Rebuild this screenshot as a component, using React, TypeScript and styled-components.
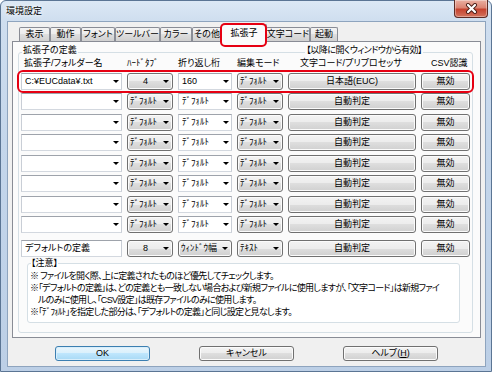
import React from "react";
import styled, { createGlobalStyle, css } from "styled-components";

const FONT = `"Liberation Sans", "Noto Sans CJK JP", sans-serif`;

const GlobalStyle = createGlobalStyle`
  html, body { margin: 0; padding: 0; background: #ffffff; }
  body {
    font-family: ${FONT};
    font-size: 9px;
    color: #000;
    font-feature-settings: "palt";
  }
  * { box-sizing: border-box; }
`;

const BTN_BG = `linear-gradient(180deg, #f3f3f3 0%, #ececec 50%, #dedede 50%, #d0d0d0 100%)`;

const Window = styled.div`
  width: 492px;
  height: 372px;
  display: flex;
  flex-direction: column;
  border: 1px solid #5b7594;
  border-radius: 6px 6px 0 0;
  padding: 0 5px 4px 6px;
  background: linear-gradient(180deg, #dce8f5 0px, #cfdeef 20px, #c4d6eb 140px, #bccfe6 100%);
`;

const TitleBar = styled.div`
  height: 20px;
  display: flex;
  align-items: flex-start;
`;

const Title = styled.span`
  margin: 5px 0 0 -1px;
  line-height: 11px;
  font-size: 9px;
  text-shadow: 0 0 3px #fff, 0 0 6px #fff;
`;

const CloseButton = styled.div`
  margin: -1px -2px 0 auto;
  width: 34px;
  height: 18px;
  display: flex;
  align-items: center;
  justify-content: center;
  border: 1px solid #5d2b24;
  border-top: none;
  border-radius: 0 0 4px 4px;
  background: linear-gradient(180deg, #eab0a2 0%, #dc8473 45%, #c6432f 55%, #d2735d 100%);
  box-shadow: inset 0 0 0 1px rgba(255, 255, 255, 0.35);
`;

const Client = styled.div`
  flex: 1;
  display: flex;
  flex-direction: column;
  background: #f0f0f0;
  border: 1px solid #8ea4be;
  padding: 0 4px 5px;
`;

const TabStrip = styled.div`
  height: 19px;
  display: flex;
  align-items: flex-end;
  padding-left: 7px;
`;

const Tab = styled.div<{ $w: number; $active?: boolean }>`
  width: ${(p) => p.$w}px;
  height: 14px;
  display: flex;
  align-items: center;
  justify-content: center;
  border: 1px solid #898c95;
  border-bottom: none;
  border-radius: 2px 2px 0 0;
  background: ${BTN_BG};
  white-space: nowrap;
  line-height: 11px;
  ${(p) =>
    p.$active &&
    css`
      width: ${p.$w + 2}px;
      height: 18px;
      margin: 0 -1px -1px;
      background: #fbfbfb;
      position: relative;
      z-index: 1;
      &::after {
        content: "";
        position: absolute;
        left: -2px;
        right: -1px;
        top: -2px;
        bottom: -5px;
        border: 2px solid #e60012;
        border-radius: 5px;
      }
    `}
`;

const Panel = styled.div`
  flex: 1;
  display: flex;
  flex-direction: column;
  border: 1px solid #898c95;
  background: #fbfbfb;
  padding: 10px 7px 4px 5px;
`;

const GroupBox = styled.div`
  flex: 1;
  display: flex;
  flex-direction: column;
  border: 1px solid #d5dfe5;
  border-radius: 3px;
  padding: 0 1px 0 2px;
`;

const GroupTitleRow = styled.div`
  margin-top: -8px;
  display: flex;
  justify-content: space-between;
  padding: 0 48px 0 1px;
  line-height: 11px;
`;

const GroupTitle = styled.span<{ $tight?: boolean }>`
  background: #fbfbfb;
  padding: 0 1px;
  white-space: nowrap;
  letter-spacing: ${(p) => (p.$tight ? "-0.5px" : "0")};
`;

const COLS = `101px 46px 54px 46px 128px 49px`;

const HeaderRow = styled.div`
  margin-top: 2px;
  display: grid;
  grid-template-columns: ${COLS};
  column-gap: 5px;
  line-height: 11px;
`;

const HeaderLabel = styled.span<{ $indent: number }>`
  padding-left: ${(p) => p.$indent}px;
  white-space: nowrap;
`;

const RowList = styled.div`
  margin-top: 3.5px;
  display: flex;
  flex-direction: column;
  gap: 3.5px;
`;

const Row = styled.div<{ $highlight?: boolean; $gap?: number }>`
  display: grid;
  grid-template-columns: ${COLS};
  column-gap: 5px;
  height: 17px;
  margin-top: ${(p) => p.$gap ?? 0}px;
  position: relative;
  ${(p) =>
    p.$highlight &&
    css`
      &::after {
        content: "";
        position: absolute;
        left: -4px;
        right: -3px;
        top: -2.5px;
        bottom: -3.5px;
        border: 2px solid #e60012;
        border-radius: 6px;
        pointer-events: none;
      }
    `}
`;

const Field = styled.div`
  height: 17px;
  display: flex;
  align-items: center;
  padding: 0 2px 0 3px;
  background: #fff;
  border: 1px solid #a9aeb6;
  border-color: #9ea3ab #c9ced6 #d3d8df #c9ced6;
  white-space: nowrap;
  overflow: hidden;
  line-height: 11px;
`;

const FieldText = styled.span`
  flex: 1;
  overflow: hidden;
`;

const Arrow = styled.span`
  flex: none;
  width: 0;
  height: 0;
  margin-left: 2px;
  border-left: 3px solid transparent;
  border-right: 3px solid transparent;
  border-top: 3px solid #000;
`;

const DropButton = styled.div`
  height: 17px;
  display: flex;
  align-items: center;
  padding: 0 3px 0 2px;
  border: 1px solid #707070;
  border-radius: 3px;
  background: ${BTN_BG};
  box-shadow: inset 0 0 0 1px #fbfbfb;
  line-height: 11px;
`;

const DropText = styled.span<{ $center?: boolean }>`
  flex: 1;
  text-align: ${(p) => (p.$center ? "center" : "left")};
  white-space: nowrap;
  overflow: hidden;
`;

const PushButton = styled.div<{ $default?: boolean; $h?: number }>`
  height: ${(p) => p.$h ?? 17}px;
  display: flex;
  align-items: center;
  justify-content: center;
  border: 1px solid #707070;
  border-radius: 3px;
  background: ${BTN_BG};
  box-shadow: inset 0 0 0 1px #fbfbfb;
  line-height: 11px;
  white-space: nowrap;
  ${(p) =>
    p.$default &&
    css`
      border-color: #3c7fb1;
      background: linear-gradient(180deg, #eaf6fd 0%, #d9f0fc 50%, #bee6fd 50%, #a7d9f5 100%);
      box-shadow: inset 0 0 0 1px #d8eefb;
    `}
`;

const NoteBox = styled.div`
  margin: 6px 11px 0 6px;
  border: 1px solid #d5dfe5;
  border-radius: 3px;
  background: #ffffff;
  padding: 0 0 4px 2px;
  display: flex;
  flex-direction: column;
`;

const NoteLegend = styled.span`
  align-self: flex-start;
  margin: -6px 0 0 1px;
  line-height: 11px;
  background: linear-gradient(180deg, #fbfbfb 50%, #ffffff 50%);
  white-space: nowrap;
`;

const NoteLines = styled.div`
  padding-top: 1px;
  letter-spacing: -0.7px;
`;

const NoteLine = styled.div<{ $indent?: number }>`
  line-height: 12px;
  white-space: nowrap;
  padding-left: ${(p) => p.$indent ?? 0}px;
`;

const ButtonRow = styled.div`
  margin-top: 8px;
  display: flex;
  justify-content: center;
  gap: 49px;
`;

const DialogButton = styled(PushButton)`
  width: 95px;
`;

const tabs = [
  { label: "表示", w: 31 },
  { label: "動作", w: 31 },
  { label: "フォント", w: 34 },
  { label: "ツールバー", w: 45 },
  { label: "カラー", w: 32 },
  { label: "その他", w: 30 },
  { label: "拡張子", w: 44, active: true },
  { label: "文字コード", w: 44 },
  { label: "起動", w: 28 },
];

const headers = [
  { label: "拡張子/フォルダー名", indent: 3 },
  { label: "ﾊｰﾄﾞﾀﾌﾞ", indent: 0 },
  { label: "折り返し桁", indent: 0 },
  { label: "編集モード", indent: 0 },
  { label: "文字コード/プリプロセッサ", indent: 12 },
  { label: "CSV認識", indent: 10 },
];

type RowData = { ext: string; tab: string; wrap: string; mode: string; code: string; csv: string };

const DEF = "ﾃﾞﾌｫﾙﾄ";
const rows: RowData[] = [
  { ext: "C:¥EUCdata¥.txt", tab: "4", wrap: "160", mode: DEF, code: "日本語(EUC)", csv: "無効" },
  ...Array.from({ length: 7 }, () => ({ ext: "", tab: DEF, wrap: DEF, mode: DEF, code: "自動判定", csv: "無効" })),
];

const isNum = (s: string) => /^\d+$/.test(s);

export default function App() {
  return (
    <>
      <GlobalStyle />
      <Window>
        <TitleBar>
          <Title>環境設定</Title>
          <CloseButton>
            <svg width="13" height="11" viewBox="0 0 13 11">
              <path d="M3 2 L10 9 M10 2 L3 9" stroke="#4a1d16" strokeWidth="4" strokeLinecap="round" />
              <path d="M3 2 L10 9 M10 2 L3 9" stroke="#ffffff" strokeWidth="2.2" strokeLinecap="round" />
            </svg>
          </CloseButton>
        </TitleBar>
        <Client>
          <TabStrip>
            {tabs.map((t) => (
              <Tab key={t.label} $w={t.w} $active={t.active}>
                {t.label}
              </Tab>
            ))}
          </TabStrip>
          <Panel>
            <GroupBox>
              <GroupTitleRow>
                <GroupTitle>拡張子の定義</GroupTitle>
                <GroupTitle $tight>【以降に開くウィンドウから有効】</GroupTitle>
              </GroupTitleRow>
              <HeaderRow>
                {headers.map((h) => (
                  <HeaderLabel key={h.label} $indent={h.indent}>
                    {h.label}
                  </HeaderLabel>
                ))}
              </HeaderRow>
              <RowList>
                {rows.map((r, i) => (
                  <Row key={i} $highlight={i === 0}>
                    <Field>
                      <FieldText>{r.ext}</FieldText>
                      <Arrow />
                    </Field>
                    <DropButton>
                      <DropText $center={isNum(r.tab)}>{r.tab}</DropText>
                      <Arrow />
                    </DropButton>
                    <Field>
                      <FieldText>{r.wrap}</FieldText>
                      <Arrow />
                    </Field>
                    <DropButton>
                      <DropText>{r.mode}</DropText>
                      <Arrow />
                    </DropButton>
                    <PushButton>{r.code}</PushButton>
                    <PushButton>{r.csv}</PushButton>
                  </Row>
                ))}
              </RowList>
              <Row $gap={7}>
                <Field>
                  <FieldText>デフォルトの定義</FieldText>
                </Field>
                <DropButton>
                  <DropText $center>8</DropText>
                  <Arrow />
                </DropButton>
                <DropButton>
                  <DropText>ｳｨﾝﾄﾞｳ幅</DropText>
                  <Arrow />
                </DropButton>
                <DropButton>
                  <DropText>ﾃｷｽﾄ</DropText>
                  <Arrow />
                </DropButton>
                <PushButton>自動判定</PushButton>
                <PushButton>無効</PushButton>
              </Row>
              <NoteBox>
                <NoteLegend>【注意】</NoteLegend>
                <NoteLines>
                  <NoteLine>※ ファイルを開く際、上に定義されたものほど優先してチェックします。</NoteLine>
                  <NoteLine>
                    ※「デフォルトの定義」は、どの定義とも一致しない場合および新規ファイルに使用しますが、「文字コード」は新規ファイ
                  </NoteLine>
                  <NoteLine $indent={8}>ルのみに使用し、「CSV設定」は既存ファイルのみに使用します。</NoteLine>
                  <NoteLine>※「ﾃﾞﾌｫﾙﾄ」を指定した部分は、「デフォルトの定義」と同じ設定と見なします。</NoteLine>
                </NoteLines>
              </NoteBox>
            </GroupBox>
          </Panel>
          <ButtonRow>
            <DialogButton $default $h={15}>OK</DialogButton>
            <DialogButton $h={15}>キャンセル</DialogButton>
            <DialogButton $h={15}>
              <span>
                ヘルプ(<u>H</u>)
              </span>
            </DialogButton>
          </ButtonRow>
        </Client>
      </Window>
    </>
  );
}
